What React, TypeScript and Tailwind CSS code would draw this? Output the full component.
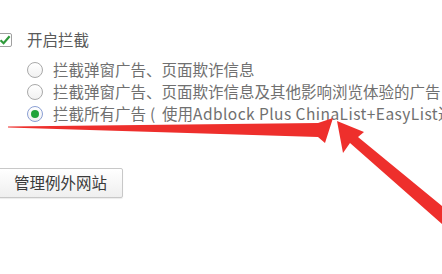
import { useState } from 'react'

function Radio({ checked }: { checked: boolean }) {
  return (
    <span
      className={
        'flex items-center justify-center w-[16px] h-[16px] rounded-full border bg-gradient-to-b from-white to-[#f1f1f1] shrink-0 ' +
        (checked ? 'border-[#8b9fd4]' : 'border-[#a9a9a9]')
      }
    >
      {checked && <span className="w-[8px] h-[8px] rounded-full bg-[#22a33a]" />}
    </span>
  )
}

export default function App() {
  const [selected, setSelected] = useState(2)
  const [enabled, setEnabled] = useState(true)

  const options = [
    <>拦截弹窗广告、页面欺诈信息</>,
    <>拦截弹窗广告、页面欺诈信息及其他影响浏览体验的广告</>,
    <>
      拦截所有广告<span className="inline-block w-[16px] pl-[4px]">(</span>使用
      <span className="tracking-[0.45px]">Adblock Plus ChinaList+EasyList</span>过滤规则)
    </>,
  ]

  return (
    <div className="relative w-[442px] h-[274px] bg-white overflow-hidden font-['Noto_Sans_CJK_SC','Noto_Sans',sans-serif]">
      <div className="flex flex-col pt-[31px]">
        <label
          className="flex items-center h-[18px] -ml-[2px] cursor-pointer"
          onClick={() => setEnabled(!enabled)}
        >
          <span className="flex items-center justify-center w-[14px] h-[14px] border border-[#a0a0a0] rounded-[2px] bg-white shrink-0">
            {enabled && (
              <svg width="12" height="12" viewBox="0 0 12 12">
                <path d="M1.5 6.2 L4.6 9.2 L10.6 2.2" fill="none" stroke="#2f9a3b" strokeWidth="2.2" />
              </svg>
            )}
          </span>
          <span className="ml-[15px] text-[15.5px] text-[#5a5a5a]">开启拦截</span>
        </label>

        <div className="flex flex-col mt-[10px] pl-[27px]">
          {options.map((text, i) => (
            <div
              key={i}
              className="flex items-center h-[22px] cursor-pointer"
              onClick={() => setSelected(i)}
            >
              <Radio checked={selected === i} />
              <span className="ml-[10px] text-[15.5px] text-[#707070] whitespace-nowrap">{text}</span>
            </div>
          ))}
        </div>

        <button
          type="button"
          className="mt-[43px] -ml-[2px] w-[125px] h-[30px] border border-[#c8c8c8] rounded-[2px] bg-gradient-to-b from-white to-[#efefef] text-[15.5px] text-[#3a3a3a] shadow-[0_1px_1px_rgba(0,0,0,0.08)]"
        >
          管理例外网站
        </button>
      </div>

      {/* red annotation arrows */}
      <svg className="absolute inset-0 pointer-events-none" width="442" height="274" viewBox="0 0 442 274">
        <polygon
          points="8,126.5 318,123 333,118 325,143 318,137 8,127.5"
          fill="#ee2f2c"
        />
        <polygon
          points="337,121 364,132 358,137 442,206 442,224 350,143 343,153"
          fill="#ee2f2c"
        />
      </svg>
    </div>
  )
}
